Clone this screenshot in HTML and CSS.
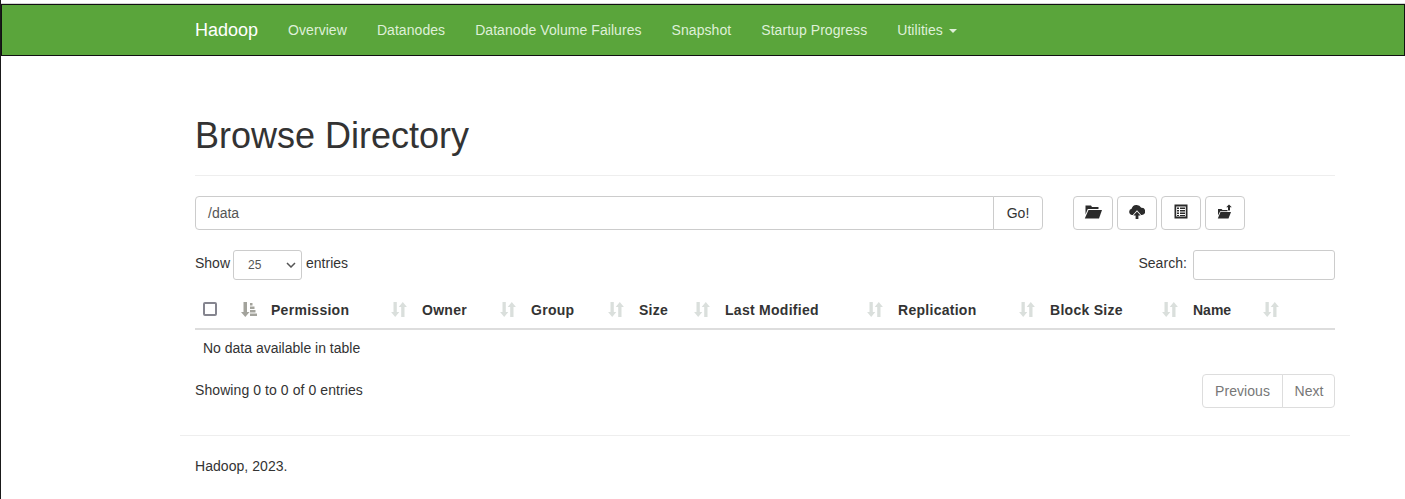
FILE: index.html
```html
<!DOCTYPE html>
<html lang="en">
<head>
<meta charset="utf-8">
<title>Browsing HDFS</title>
<link rel="stylesheet" href="styles.css">
</head>
<body>
<header class="topbar">
  <nav class="nav">
    <a class="brand">Hadoop</a>
    <a class="nav-link">Overview</a>
    <a class="nav-link">Datanodes</a>
    <a class="nav-link">Datanode Volume Failures</a>
    <a class="nav-link">Snapshot</a>
    <a class="nav-link">Startup Progress</a>
    <a class="nav-link">Utilities <span class="caret"></span></a>
  </nav>
</header>
<main class="container">
  <h1 class="title">Browse Directory</h1>
  <div class="path-row">
    <div class="path-group">
      <div class="path-input">/data</div>
      <button class="go">Go!</button>
    </div>
    <div class="tools">
      <button class="tool"><svg width="18" height="14" viewBox="0 0 18 14"><path d="M1.500 0.500h5.500l1 1.500h6.500v2H3.800L1.500 9.500z" fill="#2b2b2b"/><path d="M4.500 5H18l-3 8.500H0.800z" fill="#2b2b2b"/></svg></button>
      <button class="tool"><svg width="16" height="15" viewBox="0 0 16 15"><path d="M3.800 11H3.200A3.200 3.200 0 0 1 2.600 4.700 5.200 5.200 0 0 1 12.200 3.800a3.600 3.600 0 0 1 0.800 7.200h-0.800L8 6.200z" fill="#2b2b2b"/><path d="M8 7.600l3.600 3.900H9.400V15H6.600v-3.500H4.400z" fill="#2b2b2b"/></svg></button>
      <button class="tool"><svg width="14" height="15" viewBox="0 0 14 15"><path fill-rule="evenodd" d="M0.500 0.500h13v14h-13zM2.200 2.500v10h9.600v-10z" fill="#2b2b2b"/><path d="M3 3.500h2v1.500H3zM6 3.500h5V5H6zM3 6h2v1.500H3zM6 6h5v1.500H6zM3 8.500h2V10H3zM6 8.500h5V10H6zM3 11h2v1H3zM6 11h5v1H6z" fill="#2b2b2b"/></svg></button>
      <button class="tool"><svg width="16" height="15" viewBox="0 0 16 15"><path d="M1 5h3.500l1 1h5v1.200H3.200L1 11.500z" fill="#2b2b2b"/><path d="M3.500 8H14l-2.500 6.500H0.800z" fill="#2b2b2b"/><path d="M12 0.500l2.800 2.800H13v3.200h-2V3.300H9.200z" fill="#2b2b2b"/></svg></button>
    </div>
  </div>
  <div class="controls">
    <label class="length">Show <span class="select">25<svg class="chev" width="10" height="6" viewBox="0 0 10 6"><path d="M1 1l4 4 4-4" fill="none" stroke="#555" stroke-width="1.500"/></svg></span> <span class="after">entries</span></label>
    <label class="search">Search: <span class="search-input"></span></label>
  </div>
  <table class="files">
    <colgroup>
      <col class="c-check"><col class="c-sort"><col class="c-perm"><col class="c-owner"><col class="c-group"><col class="c-size"><col class="c-mod"><col class="c-rep"><col class="c-block"><col class="c-name"><col class="c-rest">
    </colgroup>
    <thead>
      <tr>
        <th><span class="checkbox"></span></th>
        <th><svg class="sort" width="16" height="15" viewBox="0 0 16 15"><path d="M2.500 0h3.500v10h2.500L4.300 15 0 10h2.500z" fill="#a3a39c"/><path d="M9 1h2.500v2.400H9zM9 4.500h4.500v2.400H9zM9 8h5.500v2.400H9zM9 11.500h7v2.400H9z" fill="#a3a39c"/></svg></th>
        <th><div class="th"><span>Permission</span><svg class="sort" width="16" height="15" viewBox="0 0 16 15"><path d="M2.500 0h3.300v10h2.500L4.200 15 0.100 10h2.400z" fill="#dadfdc"/><path d="M11.800 0l4.100 5h-2.400v10h-3.300V5H7.700z" fill="#dadfdc"/></svg></div></th>
        <th><div class="th"><span>Owner</span><svg class="sort" width="16" height="15" viewBox="0 0 16 15"><path d="M2.500 0h3.300v10h2.500L4.200 15 0.100 10h2.400z" fill="#dadfdc"/><path d="M11.800 0l4.100 5h-2.400v10h-3.300V5H7.700z" fill="#dadfdc"/></svg></div></th>
        <th><div class="th"><span>Group</span><svg class="sort" width="16" height="15" viewBox="0 0 16 15"><path d="M2.500 0h3.300v10h2.500L4.200 15 0.100 10h2.400z" fill="#dadfdc"/><path d="M11.800 0l4.100 5h-2.400v10h-3.300V5H7.700z" fill="#dadfdc"/></svg></div></th>
        <th><div class="th"><span>Size</span><svg class="sort" width="16" height="15" viewBox="0 0 16 15"><path d="M2.500 0h3.300v10h2.500L4.200 15 0.100 10h2.400z" fill="#dadfdc"/><path d="M11.800 0l4.100 5h-2.400v10h-3.300V5H7.700z" fill="#dadfdc"/></svg></div></th>
        <th><div class="th"><span>Last Modified</span><svg class="sort" width="16" height="15" viewBox="0 0 16 15"><path d="M2.500 0h3.300v10h2.500L4.200 15 0.100 10h2.400z" fill="#dadfdc"/><path d="M11.800 0l4.100 5h-2.400v10h-3.300V5H7.700z" fill="#dadfdc"/></svg></div></th>
        <th><div class="th"><span>Replication</span><svg class="sort" width="16" height="15" viewBox="0 0 16 15"><path d="M2.500 0h3.300v10h2.500L4.200 15 0.100 10h2.400z" fill="#dadfdc"/><path d="M11.800 0l4.100 5h-2.400v10h-3.300V5H7.700z" fill="#dadfdc"/></svg></div></th>
        <th><div class="th"><span>Block Size</span><svg class="sort" width="16" height="15" viewBox="0 0 16 15"><path d="M2.500 0h3.300v10h2.500L4.200 15 0.100 10h2.400z" fill="#dadfdc"/><path d="M11.800 0l4.100 5h-2.400v10h-3.300V5H7.700z" fill="#dadfdc"/></svg></div></th>
        <th><div class="th"><span>Name</span><svg class="sort" width="16" height="15" viewBox="0 0 16 15"><path d="M2.500 0h3.300v10h2.500L4.200 15 0.100 10h2.400z" fill="#dadfdc"/><path d="M11.800 0l4.100 5h-2.400v10h-3.300V5H7.700z" fill="#dadfdc"/></svg></div></th>
        <th></th>
      </tr>
    </thead>
    <tbody>
      <tr><td colspan="11">No data available in table</td></tr>
    </tbody>
  </table>
  <div class="table-foot">
    <div class="info">Showing 0 to 0 of 0 entries</div>
    <div class="pager"><a class="page prev">Previous</a><a class="page next">Next</a></div>
  </div>
  <div class="rule-wrap"><hr class="rule"></div>
  <footer class="foot">Hadoop, 2023.</footer>
</main>
</body>
</html>
```

FILE: styles.css
```css
* { box-sizing: border-box; }
html, body { margin: 0; padding: 0; }
body {
  height: 499px;
  overflow: hidden;
  background: #fff;
  border-left: 1px solid #1a1a1a;
  padding-top: 4px;
  font-family: "Liberation Sans", Arial, sans-serif;
  font-size: 14px;
  line-height: 20px;
  color: #333;
}
.topbar {
  height: 52px;
  margin-left: -1px;
  background: #5aa53b;
  border: 1px solid #111;
  border-left-width: 2px;
  box-shadow: 0 -1px 0 #d4d4d4;
}
.nav {
  width: 1170px;
  margin-left: 178px;
  padding: 0 15px;
  display: flex;
  align-items: center;
  height: 50px;
}
.brand { color: #fff; font-size: 18px; margin-right: 30px; }
.nav-link { color: #dff0d8; margin-right: 30px; letter-spacing: 0.06px; }
.caret {
  display: inline-block;
  width: 0; height: 0;
  margin-left: 2px;
  vertical-align: middle;
  border-top: 4px solid #dff0d8;
  border-left: 4px solid transparent;
  border-right: 4px solid transparent;
}
.container { width: 1170px; margin-left: 179px; padding: 0 15px; }
.title {
  margin: 0;
  padding: 60px 0 19px;
  height: 120px;
  border-bottom: 1px solid #eee;
  font-size: 36px;
  line-height: 40px;
  font-weight: 500;
  color: #333;
}
.path-row { display: flex; margin-top: 20px; height: 34px; }
.path-group { display: flex; width: 848px; }
.path-input {
  flex: 1;
  height: 34px;
  padding: 6px 12px;
  border: 1px solid #ccc;
  border-radius: 4px 0 0 4px;
  color: #555;
}
.go {
  width: 50px;
  height: 34px;
  margin-left: -1px;
  background: #fff;
  border: 1px solid #ccc;
  border-radius: 0 4px 4px 0;
  font: inherit;
  color: #333;
  padding: 0;
}
.tools { display: flex; gap: 4px; margin-left: 30px; }
.tool {
  width: 40px;
  height: 34px;
  background: #fff;
  border: 1px solid #ccc;
  border-radius: 4px;
  padding: 0 0 3px;
  display: flex;
  align-items: center;
  justify-content: center;
}
.controls {
  display: flex;
  justify-content: space-between;
  margin-top: 20px;
  height: 30px;
}
.length, .search { display: flex; align-items: flex-start; gap: 4px; line-height: 27px; }
.search { letter-spacing: 0.05px; }
.select {
  width: 69px;
  height: 30px;
  margin-left: -1px;
  border: 1px solid #ccc;
  border-radius: 3px;
  padding: 0 0 0 14px;
  font-size: 12px;
  line-height: 29px;
  color: #555;
  display: flex;
  align-items: center;
  justify-content: space-between;
}
.chev { margin-right: 5px; }
.search { gap: 6px; }
.search-input {
  display: block;
  width: 142px;
  height: 30px;
  border: 1px solid #ccc;
  border-radius: 3px;
}
.files {
  width: 1140px;
  table-layout: fixed;
  border-collapse: collapse;
  margin-top: 10px;
}
.c-check { width: 38px; }
.c-sort { width: 30px; }
.c-perm { width: 151px; }
.c-owner { width: 109px; }
.c-group { width: 108px; }
.c-size { width: 86px; }
.c-mod { width: 173px; }
.c-rep { width: 152px; }
.c-block { width: 143px; }
.c-name { width: 101px; }
.c-rest { width: 49px; }
th {
  height: 39px;
  padding: 8px 7px 8px 8px;
  text-align: left;
  vertical-align: middle;
  border-bottom: 2px solid #ddd;
  font-weight: 700;
  letter-spacing: 0.28px;
}
th:nth-child(10) { letter-spacing: 0; }
.th { display: flex; justify-content: space-between; align-items: center; }
.th span { margin-top: 2px; }
.sort { display: block; }
.checkbox {
  display: block;
  width: 14px;
  height: 14px;
  border: 2px solid #85858f;
  border-radius: 2px;
}
td { height: 37px; padding: 8px; border: 0; }
.table-foot {
  display: flex;
  justify-content: space-between;
  align-items: flex-start;
  margin-top: 8px;
}
.info { margin-top: 6px; letter-spacing: 0.08px; }
.pager { display: flex; }
.page {
  height: 34px;
  padding: 6px 0;
  border: 1px solid #ddd;
  color: #777;
  background: #fff;
  text-align: center;
  letter-spacing: 0.06px;
}
.prev { width: 81px; border-radius: 4px 0 0 4px; }
.next { width: 53px; border-radius: 0 4px 4px 0; margin-left: -1px; padding-left: 1px; }
.rule-wrap { margin: 27px -15px 0; }
.rule { margin: 0; border: 0; border-top: 1px solid #eee; }
.foot { margin-top: 20px; letter-spacing: 0.05px; }
```
